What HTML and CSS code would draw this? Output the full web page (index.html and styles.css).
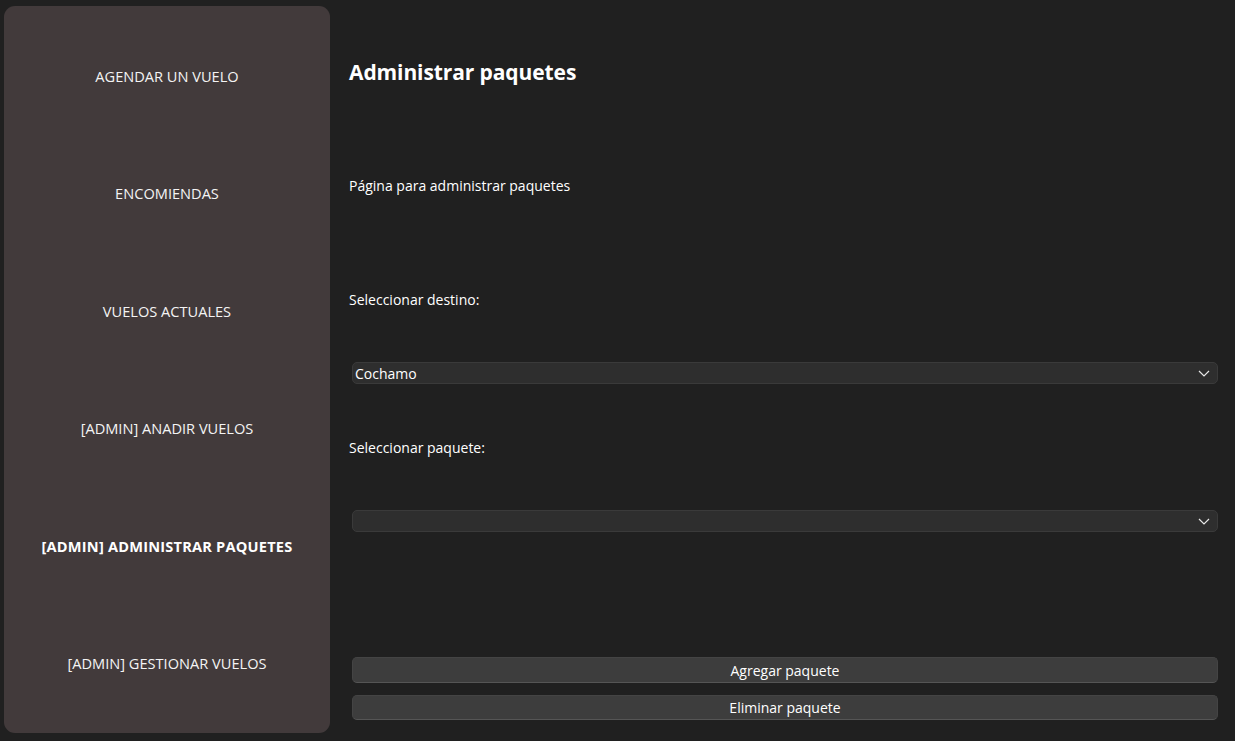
FILE: index.html
```html
<!DOCTYPE html>
<html lang="es">
<head>
<meta charset="utf-8">
<title>Administrar paquetes</title>
<link rel="stylesheet" href="styles.css">
</head>
<body>
<div class="app">
  <nav class="sidebar">
    <div class="nav-item">AGENDAR UN VUELO</div>
    <div class="nav-item">ENCOMIENDAS</div>
    <div class="nav-item">VUELOS ACTUALES</div>
    <div class="nav-item">[ADMIN] ANADIR VUELOS</div>
    <div class="nav-item active">[ADMIN] ADMINISTRAR PAQUETES</div>
    <div class="nav-item">[ADMIN] GESTIONAR VUELOS</div>
  </nav>
  <main class="content">
    <h1 class="title">Administrar paquetes</h1>
    <p class="desc">Página para administrar paquetes</p>
    <label class="label">Seleccionar destino:</label>
    <div class="combo">
      <span class="combo-text">Cochamo</span>
      <svg class="chevron" width="12" height="7" viewBox="0 0 12 7"><path d="M1 1 L6 6 L11 1" fill="none" stroke="#e8e8e8" stroke-width="1.2"/></svg>
    </div>
    <label class="label">Seleccionar paquete:</label>
    <div class="combo">
      <span class="combo-text"></span>
      <svg class="chevron" width="12" height="7" viewBox="0 0 12 7"><path d="M1 1 L6 6 L11 1" fill="none" stroke="#e8e8e8" stroke-width="1.2"/></svg>
    </div>
    <button class="btn btn-first">Agregar paquete</button>
    <button class="btn btn-second">Eliminar paquete</button>
  </main>
</div>
</body>
</html>
```
FILE: styles.css
```css
html, body {
  margin: 0;
  padding: 0;
  background: #202020;
  color: #ffffff;
  font-family: "Open Sans", "Noto Sans", sans-serif;
  font-size: 14px;
}
.app {
  display: flex;
  height: 741px;
  padding: 6px 17px 8px 4px;
  box-sizing: border-box;
}
.sidebar {
  width: 326px;
  flex: none;
  background: #423a3b;
  border-radius: 11px;
  padding: 11px 0;
  box-sizing: border-box;
  display: flex;
  flex-direction: column;
}
.nav-item {
  flex: 1;
  display: flex;
  align-items: center;
  justify-content: center;
  font-size: 14.6px;
  color: #f4f4f4;
}
.nav-item.active {
  font-weight: 700;
  color: #ffffff;
  letter-spacing: 0.2px;
}
.content {
  flex: 1;
  display: flex;
  flex-direction: column;
  padding-left: 19px;
}
.title {
  margin: 51px 0 0 0;
  font-size: 21px;
  line-height: 30px;
  font-weight: 700;
  letter-spacing: -0.1px;
}
.desc {
  margin: 89px 0 0 0;
  line-height: 20px;
  font-size: 14px;
}
.label {
  display: block;
  margin-top: 94px;
  line-height: 20px;
}
.combo + .label { margin-top: 54px; }
.combo {
  margin: 52px 0 0 3px;
  height: 22px;
  box-sizing: border-box;
  background: #2e2e2e;
  border: 1px solid #3a3a3a;
  border-radius: 5px;
  display: flex;
  align-items: center;
  justify-content: space-between;
  padding: 0 7px 0 2px;
}
.combo-text {
  font-size: 14px;
  color: #ffffff;
}
.chevron { display: block; }
.btn {
  margin-left: 3px;
  height: 26px;
  box-sizing: border-box;
  background: #3d3d3d;
  border: 1px solid #444444;
  border-bottom-color: #555555;
  border-radius: 5px;
  color: #ffffff;
  font-family: "Open Sans", "Noto Sans", sans-serif;
  font-size: 14px;
  padding: 0;
}
.btn-first { margin-top: 125px; }
.btn-second { margin-top: 12px; height: 25px; }
```
